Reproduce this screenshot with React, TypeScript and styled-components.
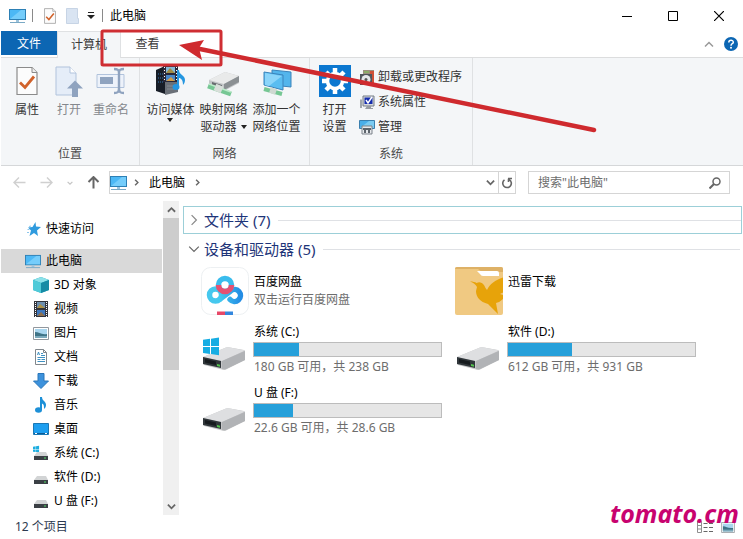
import React from "react";
import styled, { createGlobalStyle } from "styled-components";

const GlobalStyle = createGlobalStyle`
  * { box-sizing: border-box; }
  body { margin: 0; background: #fff; }
  body, button, input {
    font-family: "Noto Sans", "Noto Sans CJK SC", sans-serif;
    font-size: 12px;
    line-height: 18px;
    color: #1a1a1a;
  }
  button { border: 0; padding: 0; margin: 0; background: none; }
  svg { display: block; flex: none; }
`;

/* ---------- frame ---------- */

const Window = styled.div`
  position: relative;
  display: flex;
  flex-direction: column;
  min-height: 100vh;
  padding-left: 1px;
  background: #fff;
  overflow: hidden;
`;

const TitleBar = styled.header`
  display: flex;
  align-items: center;
  height: 31px;
  padding: 0 1px 0 8px;
`;

const TitleDivider = styled.span<{ $left: number; $right: number }>`
  width: 1px;
  height: 13px;
  margin: 0 ${(p) => p.$right}px 0 ${(p) => p.$left}px;
  background: #8a8a8a;
`;

const QuickButton = styled.button<{ $gap: number }>`
  margin-right: ${(p) => p.$gap}px;
`;

const Title = styled.h1`
  flex: 1;
  margin: 0;
  font-size: 12px;
  font-weight: 400;
  color: #000;
`;

const CaptionButton = styled.button`
  display: grid;
  place-items: center;
  width: 46px;
  height: 30px;
`;

/* ---------- ribbon ---------- */

const Tabs = styled.div`
  display: flex;
  height: 27px;
`;

const FileTab = styled.button`
  width: 56px;
  height: 24px;
  padding-top: 1px;
  color: #fff;
  background: #0c66b3;
`;

const TabSlot = styled.div<{ $grow?: boolean }>`
  display: flex;
  flex: ${(p) => (p.$grow ? "1" : "none")};
  border-bottom: 1px solid #dcddde;
`;

const Tab = styled.button<{ $active?: boolean; $width: number }>`
  width: ${(p) => p.$width}px;
  color: #3b3b3b;
  background: ${(p) => (p.$active ? "#f4f6f8" : "#fff")};
  border: solid #dfe1e3;
  border-width: ${(p) => (p.$active ? "1px 1px 0" : "0")};
`;

const TabTools = styled.div`
  display: flex;
  align-items: center;
  gap: 10px;
  margin-left: auto;
  padding-right: 5px;
`;

const Ribbon = styled.div`
  display: flex;
  height: 108px;
  background: #f4f6f8;
  border-bottom: 1px solid #d5d7d9;
`;

const Group = styled.section<{ $width: number }>`
  display: flex;
  flex-direction: column;
  width: ${(p) => p.$width}px;
  padding: 7px 0 2px;
  border-right: 1px solid #dfe1e3;
`;

const GroupBody = styled.div<{ $left: number }>`
  display: flex;
  flex: 1;
  align-items: flex-start;
  padding-left: ${(p) => p.$left}px;
`;

const GroupName = styled.h2`
  margin: 0;
  font-size: 12px;
  font-weight: 400;
  text-align: center;
  color: #4a4a4a;
`;

const BigButton = styled.button<{ $width: number; $muted?: boolean }>`
  display: flex;
  flex-direction: column;
  align-items: center;
  gap: 4px;
  width: ${(p) => p.$width}px;
  line-height: 17px;
  white-space: nowrap;
  color: ${(p) => (p.$muted ? "#84888d" : "#333")};
`;

const Lines = styled.span`
  display: flex;
  flex-direction: column;
  align-items: center;
`;

const DropLine = styled.span`
  display: flex;
  align-items: center;
  gap: 4px;
`;

const SmallList = styled.div`
  display: flex;
  flex-direction: column;
  gap: 7px;
  padding: 3px 0 0 3px;
`;

const SmallButton = styled.button`
  display: flex;
  align-items: center;
  gap: 3px;
  color: #333;
`;

/* ---------- address row ---------- */

const AddressRow = styled.div`
  display: flex;
  align-items: center;
  height: 35px;
  padding: 0 13px 2px 12px;
`;

const NavButtons = styled.div`
  display: flex;
  align-items: center;
  gap: 14px;
  width: 96px;
`;

const AddressBox = styled.div`
  display: flex;
  flex: 1;
  align-items: center;
  height: 23px;
  border: 1px solid #d5d5d5;
`;

const Crumbs = styled.div`
  display: flex;
  flex: 1;
  align-items: center;
  gap: 6px;
`;

const Crumb = styled.button`
  margin: 0 3px;
  color: #000;
`;

const RefreshButton = styled.button`
  display: grid;
  place-items: center;
  width: 17px;
  height: 21px;
  margin-left: 3px;
  border-left: 1px solid #d5d5d5;
`;

const SearchBox = styled.label`
  display: flex;
  align-items: center;
  width: 202px;
  height: 23px;
  margin-left: 12px;
  padding: 0 8px 0 9px;
  border: 1px solid #d5d5d5;
`;

const SearchInput = styled.input`
  flex: 1;
  min-width: 0;
  padding: 0;
  border: 0;
  outline: 0;
  background: none;
  &::placeholder { color: #6d6d6d; opacity: 1; }
`;

/* ---------- main area ---------- */

const Main = styled.div`
  display: flex;
  flex: 1;
`;

const SideBar = styled.nav`
  width: 162px;
  padding: 16px 1px 0 0;
`;

const SideItem = styled.button<{ $depth?: number; $selected?: boolean; $after?: number }>`
  display: flex;
  align-items: center;
  gap: 5px;
  width: 100%;
  height: 24px;
  margin-bottom: ${(p) => p.$after ?? 0}px;
  padding-left: ${(p) => 24 + (p.$depth ?? 0) * 8}px;
  background: ${(p) => (p.$selected ? "#d9d9d9" : "none")};
  color: #000;
`;

const ScrollBar = styled.div`
  display: flex;
  flex-direction: column;
  width: 16px;
  background: #f0f0f0;
`;

const ScrollArrow = styled.button`
  display: grid;
  place-items: center;
  height: 17px;
`;

const Thumb = styled.div`
  height: 152px;
  margin-bottom: auto;
  background: #cdcdcd;
`;

const Content = styled.main`
  flex: 1;
  margin-left: 4px;
  padding-top: 5px;
`;

const SectionHead = styled.button<{ $focused?: boolean }>`
  display: flex;
  align-items: center;
  width: calc(100% - 1px);
  height: ${(p) => (p.$focused ? 28 : 30)}px;
  padding: 0 ${(p) => (p.$focused ? 0 : 1)}px 0 4px;
  border: 1px solid ${(p) => (p.$focused ? "#9ccfd8" : "transparent")};
  font-size: 15px;
  line-height: 22px;
  color: #1e3579;
`;

const SectionName = styled.span`
  margin: 0 8px 0 4px;
`;

const Rule = styled.span`
  flex: 1;
  height: 1px;
  background: #dfe1e5;
`;

const Tiles = styled.div`
  display: grid;
  grid-template-columns: repeat(auto-fill, 254px);
  grid-template-rows: 57px;
  grid-auto-rows: 61px;
  padding: 3px 0 0 18px;
`;

const Tile = styled.article`
  display: flex;
  gap: 4px;
  padding-right: 13px;
`;

const TileText = styled.div<{ $drive?: boolean }>`
  flex: 1;
  padding-top: ${(p) => (p.$drive ? 0 : 7)}px;
`;

const TileName = styled.div`
  margin-top: -1px;
  padding-left: 1px;
  color: #000;
`;

const TileInfo = styled.div`
  padding-left: 1px;
  color: #6d6d6d;
`;

const Track = styled.div`
  height: 15px;
  margin: 1px 0;
  background: #e6e6e6;
  border: 1px solid #bcbcbc;
`;

const Used = styled.div`
  height: 100%;
  background: #26a0da;
`;

const StatusBar = styled.footer`
  display: flex;
  align-items: center;
  height: 24px;
  padding: 0 8px 0 14px;
  color: #2c3a50;
`;

const Count = styled.span`
  flex: 1;
`;

const ViewButton = styled.button`
  margin-left: 8px;
`;

const Watermark = styled.div`
  position: absolute;
  right: 4px;
  bottom: 9px;
  font-family: "Noto Sans", "Open Sans", sans-serif;
  font-size: 25px;
  font-weight: 700;
  font-style: italic;
  line-height: 34px;
  color: #c8036f;
  pointer-events: none;
`;

const Markup = styled.svg`
  position: absolute;
  left: 0;
  top: 0;
  pointer-events: none;
`;

/* ---------- icons ---------- */

const Monitor = ({ w = 17 }: { w?: number }) => (
  <svg width={w} height={w - 1} viewBox="0 0 17 16">
    <rect x="0.5" y="1.5" width="16" height="10" fill="#4cb8f5" stroke="#2d80b5" />
    <path d="M1 11 12 2h4v9z" fill="#75cdfb" />
    <path d="M7 12h3v2H7z" fill="#9cc3dc" />
    <path d="M1 14.5h15" stroke="#7aa9c5" />
  </svg>
);

const CheckPage = ({ w, h }: { w: number; h: number }) => (
  <svg width={w} height={h} viewBox="0 0 22 29">
    <path d="M1 1h15l5 5v22H1z" fill="#fcfcfc" stroke="#8b8b8b" strokeWidth="1.2" />
    <path d="M16 1v5h5" fill="#eee" stroke="#8b8b8b" />
    <path d="m4 16 5 5 9-11" fill="none" stroke="#d1622b" strokeWidth="2.8" />
  </svg>
);

const OpenPage = () => (
  <svg width="28" height="32" viewBox="0 0 28 32">
    <path d="M1 2h14l6 6v22H1z" fill="#e5edf8" stroke="#b1c3dc" />
    <path d="M15 2v6h6" fill="#fff" stroke="#b1c3dc" />
    <path d="M20 15.500l8 8h-5V32h-6v-8.500h-5z" fill="#8fa3bf" />
  </svg>
);

const Rename = () => (
  <svg width="30" height="32" viewBox="0 0 30 32">
    <path d="M1 9.500h27v13H1z" fill="#edf2fa" stroke="#b1c3dc" />
    <path d="M4 12h13v7H4z" fill="#8fa3bf" />
    <path d="M18 4c4 0 5 1 5 4v15c0 4-1 5-5 5M28 4c-4 0-5 1-5 4v15c0 4 1 5 5 5" fill="none" stroke="#8fa3bf" strokeWidth="2.400" />
  </svg>
);

const Media = () => (
  <svg width="32" height="32" viewBox="0 0 32 32">
    <path d="m1 5 9-4v28L1 26z" fill="#171d27" />
    <path d="m10 8 13 2v17l-13 3z" fill="#6a7078" />
    <path d="M12 21h9M12 24h9" stroke="#858b92" />
    <path d="M3 9h5M3 13h5M3 17h5" stroke="#3779b5" strokeDasharray="1 1" />
    <path d="M8 1h15v16H8z" fill="#29283a" />
    <path d="M11 2h9v6h-9z" fill="#86b9d8" /><path d="m11 8 4-5 5 5z" fill="#9f8b45" />
    <path d="M11 10h9v6h-9z" fill="#4786c8" /><path d="m11 16 5-4 4 4z" fill="#d09b49" />
    <path d="M9.500 2v15M21.500 2v15" stroke="#fff" strokeDasharray="1 2" />
    <ellipse cx="21" cy="22" rx="3.500" ry="3" fill="#2496e0" />
    <path d="M22 22V5h2c0 5 6 5 6 10 0 2-1 4-2 5 0-5-2-7-4-7v9z" fill="#2496e0" />
  </svg>
);

const NetDrive = () => (
  <svg width="34" height="32" viewBox="0 0 34 32">
    <path d="m2 15 16-8 14 4v7l-15 8-15-5z" fill="#c3c6c8" />
    <path d="m2 15 16-8 14 4-15 8z" fill="#e9eaea" />
    <path d="m17 19 15-8v6l-15 8z" fill="#8b9093" />
    <path d="m5 17 10 3v3L5 20z" fill="#686c70" />
    <path d="m1 21 23 8" stroke="#76c794" strokeWidth="5" />
    <path d="m2 19 22 8" stroke="#bcebca" strokeWidth="1.500" />
    <path d="m8 22 7 3" stroke="#d8dfda" strokeWidth="7" />
  </svg>
);

const NetPlaces = () => (
  <svg width="30" height="32" viewBox="0 0 30 32">
    <path d="m10 5 19 2v15l-19-2z" fill="#53b5ec" stroke="#3a83bb" />
    <path d="m2 7 19 3v15L2 20z" fill="#5abdf1" stroke="#3a83bb" />
    <path d="m3 8 17 3-13 10-4-1z" fill="#8bd5fa" />
    <path d="m2 24 18 5" stroke="#76c794" strokeWidth="4" />
    <path d="m8 25 6 2" stroke="#cfd9d2" strokeWidth="6" />
  </svg>
);

const Gear = () => (
  <svg width="32" height="32" viewBox="0 0 32 32">
    <path d="M0 0h32v32H0z" fill="#0b77d0" />
    <g stroke="#fff" strokeWidth="4.500">
      <path d="M16 3v6M16 23v6M3 16h6M23 16h6M7 7l4 4M21 21l4 4M25 7l-4 4M7 25l4-4" />
    </g>
    <circle cx="16" cy="16" r="7.500" fill="none" stroke="#fff" strokeWidth="3.500" />
  </svg>
);

const Uninstall = () => (
  <svg width="16" height="17" viewBox="0 0 16 17">
    <path d="M4 1h11v14H4z" fill="#9b8e7d" /><path d="M11 2h4v12h-4z" fill="#ce5137" />
    <path d="M5 2h5v2H5z" fill="#8bad68" />
    <path d="M1 5h12v11H1z" fill="#4f555b" />
    <circle cx="7" cy="10.500" r="4.500" fill="#e5e8ea" /><circle cx="7" cy="10.500" r="1.500" fill="#555" />
  </svg>
);

const SystemProps = () => (
  <svg width="16" height="17" viewBox="0 0 16 17">
    <path d="M4 2h11v10H4z" fill="#d7dade" stroke="#757c85" />
    <path d="M5.500 3.500h8v6.500h-8z" fill="#162eae" />
    <path d="m7 6 2 3 4-6" fill="none" stroke="#fff" strokeWidth="1.500" />
    <path d="M8 12h4v2h2v1H6z" fill="#979ca2" />
    <path d="M1 5.500h2V14H1z" fill="#a1a7ad" />
  </svg>
);

const Manage = () => (
  <svg width="16" height="16" viewBox="0 0 16 16">
    <path d="M.5 1.500h15v8H.5z" fill="#49aee9" stroke="#3a7fae" />
    <path d="M1 9 10 2h5v7z" fill="#7acbf2" />
    <path d="M3 7h10v8H3z" fill="#e7eaed" stroke="#7a8189" />
    <path d="M4 9h8v2H4zM5 11h2v3H5zM9 11h2v3H9z" fill="#5c646c" />
  </svg>
);

const Caret = ({ w = 6 }: { w?: number }) => (
  <svg width={w} height="4" viewBox="0 0 6 4"><path d="M0 0h6L3 4z" fill="#222" /></svg>
);

const Chevron = ({ dir, w, color = "#666", stroke = 1.500 }: { dir: "u" | "d" | "r"; w: number; color?: string; stroke?: number }) => (
  <svg width={w} height={w} viewBox="0 0 10 10">
    <path
      d={{ u: "M1 7.500 5 3.500 9 7.500", d: "M1 3 5 7 9 3", r: "M3 1 7 5 3 9" }[dir]}
      fill="none" stroke={color} strokeWidth={stroke}
    />
  </svg>
);

const Arrow = ({ turn, color }: { turn: number; color: string }) => (
  <svg width="13" height="13" viewBox="0 0 13 13">
    <path transform={`rotate(${turn} 6.500 6.500)`} d="M12.500 6.500H1.500M6 1.500l-5 5 5 5" fill="none" stroke={color} strokeWidth={turn === 90 ? 2 : 1.500} />
  </svg>
);

const Star = () => (
  <svg width="16" height="16" viewBox="0 0 16 16">
    <path d="m10.500 1 .500 4.500 5 .500-4 3.500 1 5.500-4-3-4.500 3L6 9.500 3 6.500l4.500-.500z" fill="#2f9bde" />
    <path d="m4 5.500 2-.500M2.500 8.500h2M2 11.500h2" stroke="#8cc7ec" />
  </svg>
);

const Cube = () => (
  <svg width="16" height="16" viewBox="0 0 16 16">
    <path d="m8 0 8 3v10l-8 3-8-3V3z" fill="#1ba5bd" />
    <path d="m8 0 8 3-8 3-8-3z" fill="#8ce1e9" /><path d="m0 3 8 3v10l-8-3z" fill="#4fcad8" />
    <path d="m8 6 8-3v10l-8 3z" fill="#168ba5" />
  </svg>
);

const Film = () => (
  <svg width="16" height="16" viewBox="0 0 16 16">
    <path d="M1 0h14v16H1z" fill="#33343b" />
    <path d="M4 1h8v6H4z" fill="#6e8fae" /><path d="m4 7 3-4 5 4z" fill="#ad9145" />
    <path d="M4 9h8v6H4z" fill="#3f78bd" /><path d="m4 15 4-4 4 4z" fill="#8f6f4b" />
    <path d="M2.500 1v15M13.500 1v15" stroke="#fff" strokeDasharray="1 1" />
  </svg>
);

const Picture = ({ w = 16 }: { w?: number }) => (
  <svg width={w} height={w - 3} viewBox="0 0 16 13">
    <path d="M.5.500h15v12H.5z" fill="#fff" stroke="#92989e" />
    <path d="M2 2h12v9H2z" fill="#a9d6ef" /><path d="M2 5c4 0 6 3 12 2v4H2z" fill="#3f7487" />
    <path d="M2 9h12v2H2z" fill="#7ba9bb" />
  </svg>
);

const Doc = () => (
  <svg width="16" height="16" viewBox="0 0 16 16">
    <path d="M2.500.500h8l3 3v12h-11z" fill="#fff" stroke="#81878c" /><path d="M10.500.500v3h3" fill="none" stroke="#81878c" />
    <path d="m4.500 6 1-3 1 3M8 4.500h2M8 6.500h4M4.500 8.500h7.500M4.500 10.500h3M8.500 10.500h3.500M4.500 12.500h7.500" fill="none" stroke="#3f91c2" />
  </svg>
);

const Download = () => (
  <svg width="16" height="16" viewBox="0 0 16 16">
    <path d="M5 .500h6V8h4.500L8 15.500.500 8H5z" fill="#3d92dc" stroke="#2a76b9" />
  </svg>
);

const Music = () => (
  <svg width="16" height="16" viewBox="0 0 16 16">
    <ellipse cx="5.500" cy="13" rx="3.500" ry="2.800" fill="#1d90d7" />
    <path d="M7 13V0h2c0 4 4 4 4 8 0 2-1 3-2 4 0-3 0-5-2-5.500V13z" fill="#1d90d7" />
  </svg>
);

const Desktop = () => (
  <svg width="16" height="16" viewBox="0 0 16 16">
    <path d="M.5 2.500h15v11H.5z" fill="#1e9ff0" stroke="#1b78b5" />
    <path d="M1 12.500h14" stroke="#0b5c97" /><path d="M2 12.500h2M12 12.500h2" stroke="#fff" />
  </svg>
);

const Flag = () => (
  <path d="m0 1.800 7-1V8H0zM8 .700l8-1.200V8H8zM0 9h7v7l-7-1zM8 9h8v8.300l-8-1.200z" />
);

const MiniDrive = ({ system }: { system?: boolean }) => (
  <svg width="16" height="16" viewBox="0 0 16 16">
    {system && <g fill="#1eaee0" transform="translate(0 1) scale(.38)"><Flag /></g>}
    <path d="M4 7h9l2 4H1z" fill="#d2d4d5" />
    <path d="M1 11h14v4H1z" fill="#3b4045" /><path d="M11 13h2" stroke="#52dd66" />
  </svg>
);

const Drive = ({ system }: { system?: boolean }) => (
  <svg width="48" height="48" viewBox="0 0 48 48">
    <g transform="translate(0 2)">
      <path d="M2 31 25 21.500Q27 21 29 21.500L43 24Q44 24 44 26v8L25 43.500Q23 44 21 43.500L3 39Q2 38 2 37z" fill="#c5c6c8" />
      <path d="M2 31 25 21.500Q27 21 29 21.500L44 24.500 21 35z" fill="#dedfe1" />
      <path d="M21 35 44 25v9L24 43.500 21 43z" fill="#b1b3b6" />
      <path d="m2 31 18 4v7L2 38z" fill="#30363a" />
      <path d="m4 33 11 2.500v3.500L4 36.500z" fill="#161b1e" />
      <path d="m16 38 3 .700v2l-3-.700z" fill="#53c54d" />
    </g>
    {system && <g fill="#16ade3" transform="translate(2 14)"><Flag /></g>}
  </svg>
);

const BaiduDisk = () => (
  <svg width="48" height="48" viewBox="0 0 48 48">
    <defs><linearGradient id="disk"><stop stopColor="#43c9ef" /><stop offset="1" stopColor="#248de4" /></linearGradient></defs>
    <rect x=".5" y=".500" width="47" height="47" rx="9" fill="#fff" stroke="#edf0f2" />
    <g fill="none" strokeWidth="5.500">
      <circle cx="14.500" cy="28" r="6" stroke="#46c8ee" />
      <path d="M19 32 29.500 24a6 6 0 1 1-.500 8.500" stroke="url(#disk)" strokeLinecap="round" />
      <circle cx="24" cy="18" r="6.500" stroke="#3abced" />
      <path d="M17.500 18a6.500 6.500 0 0 0 13 0" stroke="#e65072" />
    </g>
    <path d="M16 44.500h8V48h-8z" fill="#e74868" /><path d="M24 44.500h8V48h-8z" fill="#3387de" />
  </svg>
);

const Thunder = () => (
  <svg width="48" height="48" viewBox="0 0 48 48">
    <rect width="48" height="48" rx="2" fill="#f0c982" />
    <path d="M2 0h44q2 0 2 2v3H27L23 2H0q0-2 2-2z" fill="#deb166" />
    <path d="M22 4h20q2 0 2 2v3H28q-2 0-3-2z" fill="#fff" />
    <path d="M15 14.500c3 0 5 .5 6.500 1.500 4-2 7 0 9 5l1.500 2c3-6 8-10 16-12.500v15l-3 1.500 3 1v4q-3 3-7 4l2 11-10-10c-8-2-12-7-12-13l1-4q-2-4-7-5.500z" fill="#e7a30a" />
  </svg>
);

const Refresh = () => (
  <svg width="12" height="12" viewBox="0 0 12 12">
    <path d="M3.500 2.800A4.300 4.300 0 1 0 8.300 2.600M7.500 5V1.800M11 1.500H7" fill="none" stroke="#666" strokeWidth="1.600" />
  </svg>
);

const Magnifier = () => (
  <svg width="12" height="12" viewBox="0 0 12 12">
    <circle cx="7.500" cy="4.500" r="3.500" fill="none" stroke="#666" strokeWidth="1.500" />
    <path d="M5 7 .500 11.500" stroke="#666" strokeWidth="2" />
  </svg>
);

/* ---------- data ---------- */

const places = [
  { name: "3D 对象", icon: <Cube /> },
  { name: "视频", icon: <Film /> },
  { name: "图片", icon: <Picture /> },
  { name: "文档", icon: <Doc /> },
  { name: "下载", icon: <Download /> },
  { name: "音乐", icon: <Music /> },
  { name: "桌面", icon: <Desktop /> },
  { name: "系统 (C:)", icon: <MiniDrive system /> },
  { name: "软件 (D:)", icon: <MiniDrive /> },
  { name: "U 盘 (F:)", icon: <MiniDrive /> },
];

const tiles = [
  { name: "百度网盘", icon: <BaiduDisk />, info: "双击运行百度网盘" },
  { name: "迅雷下载", icon: <Thunder /> },
  { name: "系统 (C:)", icon: <Drive system />, used: 24, info: "180 GB 可用，共 238 GB" },
  { name: "软件 (D:)", icon: <Drive />, used: 34, info: "612 GB 可用，共 931 GB" },
  { name: "U 盘 (F:)", icon: <Drive />, used: 21, info: "22.6 GB 可用，共 28.6 GB" },
];

export default function App() {
  return (
    <Window>
      <GlobalStyle />
      <TitleBar>
        <Monitor />
        <TitleDivider $left={6} $right={11} />
        <QuickButton $gap={10} aria-label="属性"><CheckPage w={12} h={16} /></QuickButton>
        <QuickButton $gap={8} aria-label="新建文件夹">
          <svg width="13" height="16" viewBox="0 0 13 16"><path d="M.5.500h11v10h1v5H.5z" fill="#d9e4f2" stroke="#c7d4e5" /></svg>
        </QuickButton>
        <QuickButton $gap={0} aria-label="自定义快速访问工具栏">
          <svg width="8" height="7" viewBox="0 0 8 7"><path d="M1 .500h6" stroke="#222" /><path d="M0 3h8L4 7z" fill="#222" /></svg>
        </QuickButton>
        <TitleDivider $left={7} $right={7} />
        <Title>此电脑</Title>
        <CaptionButton aria-label="最小化"><svg width="10" height="10"><path d="M0 5.500h10" stroke="#000" /></svg></CaptionButton>
        <CaptionButton aria-label="最大化"><svg width="10" height="10"><path d="M.5.500h9v9h-9z" fill="none" stroke="#000" /></svg></CaptionButton>
        <CaptionButton aria-label="关闭"><svg width="10" height="10"><path d="m0 0 10 10M10 0 0 10" stroke="#000" strokeWidth="1.200" /></svg></CaptionButton>
      </TitleBar>

      <Tabs>
        <TabSlot><FileTab>文件</FileTab></TabSlot>
        <Tab $active $width={64}>计算机</Tab>
        <TabSlot $grow>
          <Tab $width={53}>查看</Tab>
          <TabTools>
            <button aria-label="最小化功能区"><Chevron dir="u" w={10} color="#999" stroke={1.500} /></button>
            <button aria-label="帮助">
              <svg width="14" height="14" viewBox="0 0 14 14">
                <circle cx="7" cy="7" r="7" fill="#0c66b3" />
                <path d="M4.800 5.500c0-3 4.500-2.800 4.500-.300C9.300 7 7 6.500 7 8.700" fill="none" stroke="#fff" strokeWidth="1.500" />
                <circle cx="7" cy="10.800" r="1" fill="#fff" />
              </svg>
            </button>
          </TabTools>
        </TabSlot>
      </Tabs>

      <Ribbon>
        <Group $width={139}>
          <GroupBody $left={5}>
            <BigButton $width={42}><CheckPage w={22} h={32} />属性</BigButton>
            <BigButton $width={42} $muted><OpenPage />打开</BigButton>
            <BigButton $width={42} $muted><Rename />重命名</BigButton>
          </GroupBody>
          <GroupName>位置</GroupName>
        </Group>
        <Group $width={170}>
          <GroupBody $left={4}>
            <BigButton $width={53}><Media /><Lines>访问媒体<Caret /></Lines></BigButton>
            <BigButton $width={53}>
              <NetDrive /><Lines>映射网络<DropLine>驱动器<Caret /></DropLine></Lines>
            </BigButton>
            <BigButton $width={53}><NetPlaces /><Lines>添加一个<span>网络位置</span></Lines></BigButton>
          </GroupBody>
          <GroupName>网络</GroupName>
        </Group>
        <Group $width={163}>
          <GroupBody $left={3}>
            <BigButton $width={43}><Gear /><Lines>打开<span>设置</span></Lines></BigButton>
            <SmallList>
              <SmallButton><Uninstall />卸载或更改程序</SmallButton>
              <SmallButton><SystemProps />系统属性</SmallButton>
              <SmallButton><Manage />管理</SmallButton>
            </SmallList>
          </GroupBody>
          <GroupName>系统</GroupName>
        </Group>
      </Ribbon>

      <AddressRow>
        <NavButtons>
          <button aria-label="后退"><Arrow turn={0} color="#d0d0d0" /></button>
          <button aria-label="前进"><Arrow turn={180} color="#d0d0d0" /></button>
          <button aria-label="最近浏览的位置"><Chevron dir="d" w={6} color="#c4c4c4" stroke={2} /></button>
          <button aria-label="上移"><Arrow turn={90} color="#666" /></button>
        </NavButtons>
        <AddressBox>
          <Crumbs>
            <Monitor />
            <Chevron dir="r" w={7} stroke={2} />
            <Crumb>此电脑</Crumb>
            <Chevron dir="r" w={7} stroke={2} />
          </Crumbs>
          <button aria-label="展开地址"><Chevron dir="d" w={9} stroke={2} /></button>
          <RefreshButton aria-label="刷新"><Refresh /></RefreshButton>
        </AddressBox>
        <SearchBox>
          <SearchInput aria-label="搜索" placeholder={'搜索"此电脑"'} />
          <Magnifier />
        </SearchBox>
      </AddressRow>

      <Main>
        <SideBar>
          <SideItem $after={8}><Star />快速访问</SideItem>
          <SideItem $selected><Monitor w={16} />此电脑</SideItem>
          {places.map((p) => (
            <SideItem key={p.name} $depth={1}>{p.icon}{p.name}</SideItem>
          ))}
        </SideBar>
        <ScrollBar>
          <ScrollArrow aria-label="向上滚动"><Chevron dir="u" w={9} stroke={2} /></ScrollArrow>
          <Thumb />
          <ScrollArrow aria-label="向下滚动"><Chevron dir="d" w={9} stroke={2} /></ScrollArrow>
        </ScrollBar>
        <Content>
          <SectionHead $focused>
            <Chevron dir="r" w={12} color="#888" stroke={1} />
            <SectionName>文件夹 (7)</SectionName>
            <Rule />
          </SectionHead>
          <SectionHead>
            <Chevron dir="d" w={12} color="#666" stroke={1} />
            <SectionName>设备和驱动器 (5)</SectionName>
            <Rule />
          </SectionHead>
          <Tiles>
            {tiles.map((t) => (
              <Tile key={t.name}>
                {t.icon}
                <TileText $drive={t.used !== undefined}>
                  <TileName>{t.name}</TileName>
                  {t.used !== undefined && (
                    <Track role="progressbar" aria-label={t.name} aria-valuenow={t.used}>
                      <Used style={{ width: `${t.used}%` }} />
                    </Track>
                  )}
                  {t.info && <TileInfo>{t.info}</TileInfo>}
                </TileText>
              </Tile>
            ))}
          </Tiles>
        </Content>
      </Main>

      <Watermark>tomato.cm</Watermark>
      <StatusBar>
        <Count>12 个项目</Count>
        <ViewButton aria-label="详细信息">
          <svg width="16" height="14" viewBox="0 0 16 14">
            <path d="M.5 1.500h4v11h-4zM.5 5.500h4M.5 9h4" fill="#fff" stroke="#8f8f8f" />
            <path d="M6.500 3.500h4M12 3.500h4M6.500 7.500h4M12 7.500h4M6.500 11.500h4M12 11.500h4" stroke="#666" />
          </svg>
        </ViewButton>
        <ViewButton aria-label="大图标"><Picture w={14} /></ViewButton>
      </StatusBar>

      <Markup width="743" height="200" viewBox="0 0 743 200" aria-hidden="true">
        <rect x="102" y="31" width="119" height="34" rx="1" fill="none" stroke="#cf2e33" strokeWidth="3" />
        <path d="M195 48 594 130" stroke="#cf2a2e" strokeWidth="4.500" strokeLinecap="round" />
        <path d="m179 45 25-5-5 8 3 12z" fill="#cf2a2e" />
      </Markup>
    </Window>
  );
}
